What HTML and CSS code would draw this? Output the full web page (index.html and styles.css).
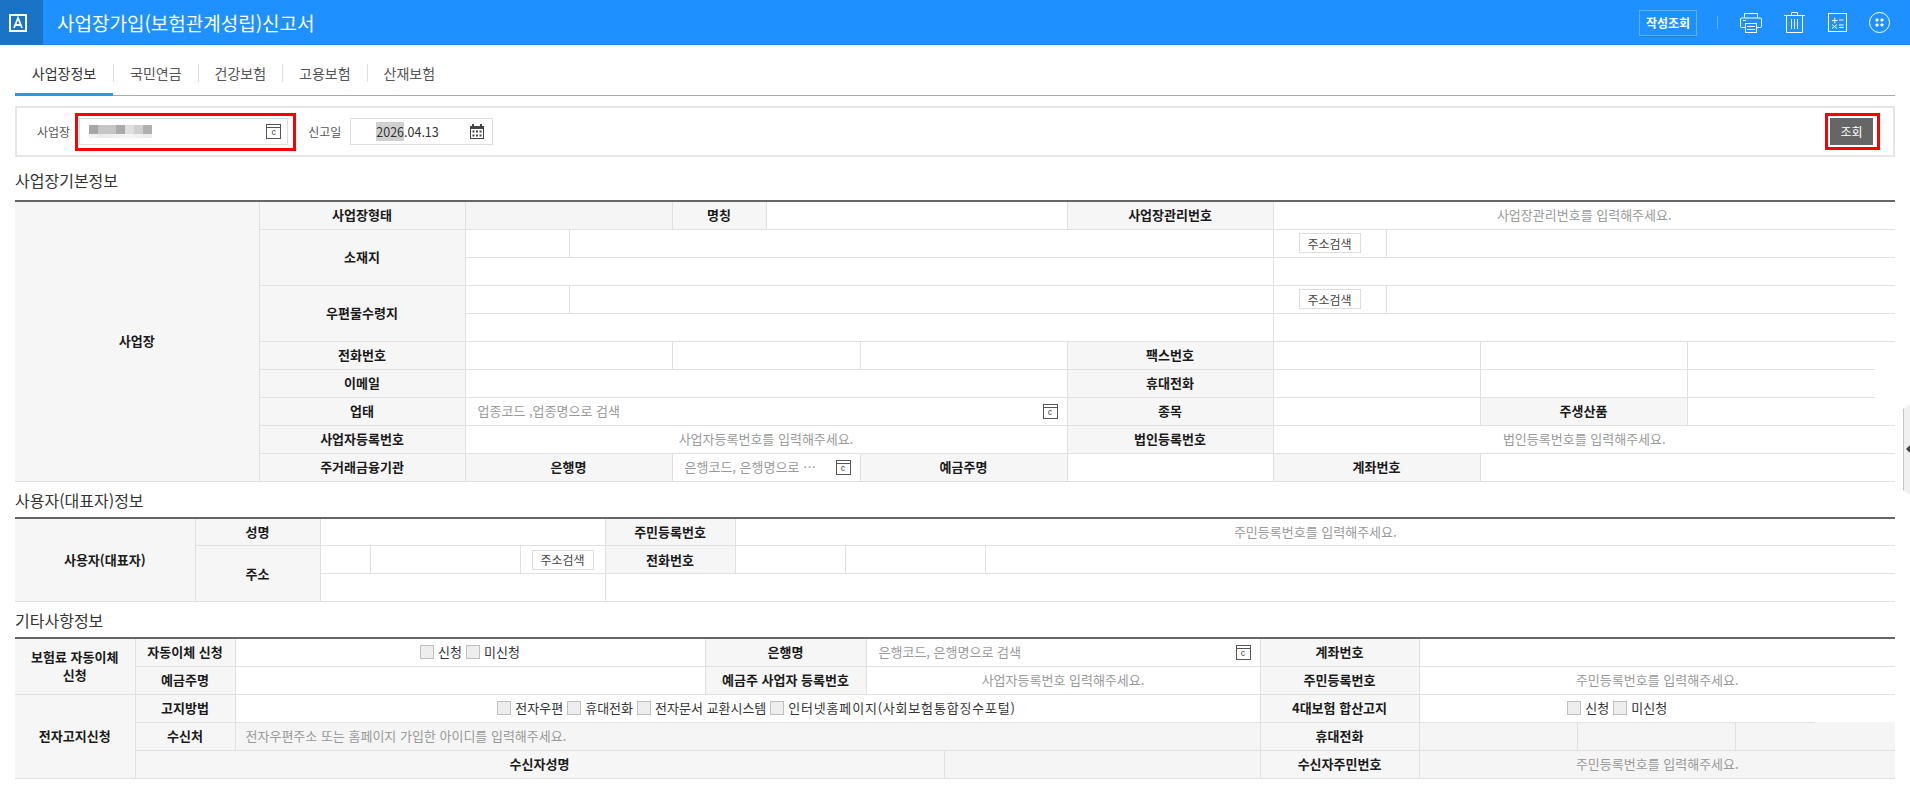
FILE: index.html
```html
<!DOCTYPE html>
<html lang="ko">
<head>
    <meta charset="UTF-8">
    <title>사업장가입(보험관계성립)신고서</title>
    <link rel="stylesheet" href="styles.css">
</head>
<body>
    <header class="topbar">
        <div class="logo">
            <svg width="18" height="18" viewBox="0 0 18 18">
                <rect x="1" y="1" width="16" height="16" fill="none" stroke="#fff" stroke-width="2"/>
                <path d="M5 14L9 4L13 14M6.200 11H11.800" fill="none" stroke="#fff" stroke-width="1.800"/>
            </svg>
        </div>
        <h1 class="title">사업장가입(보험관계성립)신고서</h1>
        <div class="actions">
            <button class="btn-history">작성조회</button>
            <span class="bar-sep"></span>
            <svg class="act" width="22" height="21" viewBox="0 0 22 21" fill="none" stroke="#fff">
                <path d="M4.500 6V1.500H17.500V6"/>
                <path d="M5.500 15.500H1.500a1 1 0 0 1-1-1V7a1 1 0 0 1 1-1H20.500a1 1 0 0 1 1 1V14.500a1 1 0 0 1-1 1H16.500"/>
                <rect x="5.500" y="11.500" width="11" height="9" fill="#1e90ff"/>
                <path d="M7 14.500H15M7 17.500H15M3 8.500H6"/>
            </svg>
            <svg class="act act-gap" width="21" height="21" viewBox="0 0 21 21" fill="none" stroke="#fff">
                <path d="M0 3.500H21M7.500 3.500V0.500H13.500V3.500"/>
                <path d="M2.500 3.500V20.500H18.500V3.500"/>
                <path d="M7.500 7V17M10.500 7V17M13.500 7V17"/>
            </svg>
            <svg class="act" width="19" height="19" viewBox="0 0 19 19" fill="none" stroke="#fff">
                <rect x="0.500" y="0.500" width="18" height="18"/>
                <path d="M4 7.500H9.500M6.750 4.700V10.300M11 7H15.500M4 11.500L9 15.500M9 11.500L4 15.500M11 12H15.500M11 14.500H15.500"/>
            </svg>
            <svg class="act" width="21" height="21" viewBox="0 0 21 21" fill="none" stroke="#fff">
                <circle cx="10.500" cy="10.500" r="10"/>
                <g fill="#fff" stroke="none">
                    <rect x="6.500" y="6.500" width="3" height="3" rx="1"/>
                    <rect x="11.500" y="6.500" width="3" height="3" rx="1"/>
                    <rect x="6.500" y="11.500" width="3" height="3" rx="1"/>
                    <rect x="11.500" y="11.500" width="3" height="3" rx="1"/>
                </g>
            </svg>
        </div>
    </header>

    <nav class="tabs">
        <a class="tab active">사업장정보</a>
        <span class="tab-sep"></span>
        <a class="tab">국민연금</a>
        <span class="tab-sep"></span>
        <a class="tab">건강보험</a>
        <span class="tab-sep"></span>
        <a class="tab">고용보험</a>
        <span class="tab-sep"></span>
        <a class="tab">산재보험</a>
    </nav>

    <main class="content">
        <div class="search">
            <label class="search-label">사업장</label>
            <div class="field field-biz marked">
                <span class="blur"></span>
                <span class="code-ico">c</span>
            </div>
            <label class="search-label label-date">신고일</label>
            <div class="field field-date">
                <span class="date-text"><span class="sel">2026</span>.04.13</span>
                <svg class="ico" width="14" height="15" viewBox="0 0 14 15">
                    <path d="M0 2H14V15H0Z" fill="#444"/>
                    <path d="M3 0V3M11 0V3" stroke="#444" stroke-width="2"/>
                    <path d="M1 5H13V14H1Z" fill="#fff"/>
                    <path d="M2.500 6.500h2v2h-2zM6 6.500h2v2H6zM9.500 6.500h2v2h-2zM2.500 10.500h2v2h-2zM6 10.500h2v2H6zM9.500 10.500h2v2h-2z" fill="#444"/>
                </svg>
            </div>
            <button class="btn-search marked">조회</button>
        </div>

        <h2 class="sec-title first">사업장기본정보</h2>
        <table class="grid">
            <colgroup>
                <col class="w244"><col class="w206"><col class="w104"><col class="w103"><col class="w94"><col class="w94">
                <col class="w207"><col class="w206"><col class="w113"><col class="w94"><col class="w207"><col class="w208">
            </colgroup>
            <tr>
                <th rowspan="10">사업장</th>
                <th>사업장형태</th>
                <td colspan="2" class="off"></td>
                <th>명칭</th>
                <td colspan="2"></td>
                <th>사업장관리번호</th>
                <td colspan="4" class="ph">사업장관리번호를 입력해주세요.</td>
            </tr>
            <tr>
                <th rowspan="2">소재지</th>
                <td></td>
                <td colspan="5"></td>
                <td class="center"><button class="btn-addr">주소검색</button></td>
                <td colspan="3"></td>
            </tr>
            <tr>
                <td colspan="6"></td>
                <td colspan="4"></td>
            </tr>
            <tr>
                <th rowspan="2">우편물수령지</th>
                <td></td>
                <td colspan="5"></td>
                <td class="center"><button class="btn-addr">주소검색</button></td>
                <td colspan="3"></td>
            </tr>
            <tr>
                <td colspan="6"></td>
                <td colspan="4"></td>
            </tr>
            <tr>
                <th>전화번호</th>
                <td colspan="2"></td>
                <td colspan="2"></td>
                <td></td>
                <th>팩스번호</th>
                <td colspan="2"></td>
                <td></td>
                <td class="short"></td>
            </tr>
            <tr>
                <th>이메일</th>
                <td colspan="5"></td>
                <th>휴대전화</th>
                <td colspan="2"></td>
                <td></td>
                <td class="short"></td>
            </tr>
            <tr>
                <th>업태</th>
                <td colspan="5">
                    <div class="lookup">
                        <span class="lookup-text">업종코드 ,업종명으로 검색</span>
                        <span class="code-ico">c</span>
                    </div>
                </td>
                <th>종목</th>
                <td colspan="2"></td>
                <th>주생산품</th>
                <td></td>
            </tr>
            <tr>
                <th>사업자등록번호</th>
                <td colspan="5" class="ph">사업자등록번호를 입력해주세요.</td>
                <th>법인등록번호</th>
                <td colspan="4" class="ph">법인등록번호를 입력해주세요.</td>
            </tr>
            <tr>
                <th>주거래금융기관</th>
                <th colspan="2">은행명</th>
                <td colspan="2">
                    <div class="lookup">
                        <span class="lookup-text">은행코드, 은행명으로 …</span>
                        <span class="code-ico">c</span>
                    </div>
                </td>
                <th>예금주명</th>
                <td></td>
                <th colspan="2">계좌번호</th>
                <td colspan="2"></td>
            </tr>
        </table>

        <h2 class="sec-title">사용자(대표자)정보</h2>
        <table class="grid">
            <colgroup>
                <col class="w180"><col class="w125"><col class="w50"><col class="w150"><col class="w85">
                <col class="w130"><col class="w110"><col class="w140"><col class="w910">
            </colgroup>
            <tr>
                <th rowspan="3">사용자(대표자)</th>
                <th>성명</th>
                <td colspan="3"></td>
                <th>주민등록번호</th>
                <td colspan="3" class="ph">주민등록번호를 입력해주세요.</td>
            </tr>
            <tr>
                <th rowspan="2">주소</th>
                <td></td>
                <td></td>
                <td class="center"><button class="btn-addr">주소검색</button></td>
                <th>전화번호</th>
                <td></td>
                <td></td>
                <td></td>
            </tr>
            <tr>
                <td colspan="3"></td>
                <td colspan="4"></td>
            </tr>
        </table>

        <h2 class="sec-title">기타사항정보</h2>
        <table class="grid">
            <colgroup>
                <col class="w120"><col class="w100"><col class="w470"><col class="w161"><col class="w78">
                <col class="w316"><col class="w159"><col class="w158"><col class="w158"><col class="w160">
            </colgroup>
            <tr>
                <th rowspan="2" class="wrap">보험료 자동이체<br>신청</th>
                <th>자동이체 신청</th>
                <td>
                    <div class="checks">
                        <label class="check"><input type="checkbox">신청</label>
                        <label class="check"><input type="checkbox">미신청</label>
                    </div>
                </td>
                <th>은행명</th>
                <td colspan="2">
                    <div class="lookup">
                        <span class="lookup-text">은행코드, 은행명으로 검색</span>
                        <span class="code-ico">c</span>
                    </div>
                </td>
                <th>계좌번호</th>
                <td colspan="3"></td>
            </tr>
            <tr>
                <th>예금주명</th>
                <td></td>
                <th>예금주 사업자 등록번호</th>
                <td colspan="2" class="ph">사업자등록번호 입력해주세요.</td>
                <th>주민등록번호</th>
                <td colspan="3" class="ph">주민등록번호를 입력해주세요.</td>
            </tr>
            <tr>
                <th rowspan="3">전자고지신청</th>
                <th>고지방법</th>
                <td colspan="4" class="pad-left">
                    <div class="checks">
                        <label class="check"><input type="checkbox">전자우편</label>
                        <label class="check"><input type="checkbox">휴대전화</label>
                        <label class="check"><input type="checkbox">전자문서 교환시스템</label>
                        <label class="check check-wide"><input type="checkbox">인터넷홈페이지(사회보험통합징수포털)</label>
                    </div>
                </td>
                <th>4대보험 합산고지</th>
                <td colspan="3" class="fade">
                    <div class="checks">
                        <label class="check"><input type="checkbox">신청</label>
                        <label class="check"><input type="checkbox">미신청</label>
                    </div>
                </td>
            </tr>
            <tr>
                <th>수신처</th>
                <td colspan="4" class="off ph left">전자우편주소 또는 홈페이지 가입한 아이디를 입력해주세요.</td>
                <th>휴대전화</th>
                <td class="off"></td>
                <td class="off"></td>
                <td class="off"></td>
            </tr>
            <tr>
                <th colspan="4">수신자성명</th>
                <td class="off"></td>
                <th>수신자주민번호</th>
                <td colspan="3" class="off ph">주민등록번호를 입력해주세요.</td>
            </tr>
        </table>
    </main>

    <div class="side-handle"></div>
</body>
</html>
```

FILE: styles.css
```css
* {
    box-sizing: border-box;
}
html, body {
    height: 100%;
    overflow: hidden;
}
body {
    margin: 0;
    background: #fff;
    color: #333;
    font-family: "Noto Sans CJK KR", "Noto Sans", sans-serif;
    font-size: 13px;
}

/* top bar */
.topbar {
    display: flex;
    align-items: center;
    height: 45px;
    background: #1e90ff;
    color: #fff;
}
.logo {
    display: flex;
    align-items: center;
    width: 43px;
    height: 45px;
    padding-left: 9px;
    background: #1a73c5;
}
.title {
    margin: 0 0 0 14px;
    font-size: 19px;
    font-weight: 400;
}
.actions {
    display: flex;
    align-items: center;
    margin-left: auto;
    padding-right: 20px;
}
.btn-history {
    width: 58px;
    height: 26px;
    padding: 0;
    border: 1px solid #5fb0ff;
    background: none;
    box-shadow: 0 1px 0 #1b82e6;
    color: #fff;
    font: 700 12px "Noto Sans CJK KR", sans-serif;
}
.bar-sep {
    width: 1px;
    height: 13px;
    margin: 0 22px 0 20px;
    background: #66b4ff;
}
.act {
    margin-right: 22px;
}
.act-gap {
    margin-right: 23px;
}
.act:last-child {
    margin-right: 0;
}

/* tabs */
.tabs {
    display: flex;
    align-items: center;
    height: 51px;
    margin: 0 15px;
    border-bottom: 1px solid #aaa;
}
.tab {
    position: relative;
    display: flex;
    align-items: center;
    justify-content: center;
    height: 50px;
    padding: 6px 16px 0;
    color: #555;
    font-size: 14px;
}
.tab.active {
    width: 98px;
    color: #333;
}
.tab.active::after {
    content: "";
    position: absolute;
    left: 0;
    right: 0;
    bottom: -1px;
    height: 3px;
    background: #1e9bf0;
}
.tab-sep {
    width: 1px;
    height: 18px;
    margin-top: 6px;
    background: #ddd;
}

.content {
    padding: 10px 15px 0;
}

/* search box */
.search {
    display: flex;
    align-items: center;
    height: 51px;
    padding: 0 20px;
    border: 2px solid #e5e5e5;
}
.search-label {
    margin-right: 9px;
    color: #555;
    font-size: 12px;
}
.label-date {
    margin-left: 20px;
}
.field {
    display: flex;
    align-items: center;
    justify-content: space-between;
    height: 27px;
    border: 1px solid #ddd;
}
.field-biz {
    width: 209px;
    padding: 0 6px 0 9px;
}
.field-date {
    width: 143px;
    padding: 0 8px 0 25px;
}
.marked {
    position: relative;
}
.marked::after {
    content: "";
    position: absolute;
    top: -6px;
    right: -9px;
    bottom: -7px;
    left: -5px;
    border: 3px solid #f00;
}
.btn-search.marked::after {
    top: -5px;
    right: -7px;
    bottom: -5px;
}
.blur {
    width: 63px;
    height: 13px;
    background:
        linear-gradient(to right, #a6a6a6 0 9px, #c5c5c5 9px 27px, #aaa 27px 36px, #e0e0e0 36px 45px, #cfcfcf 45px 54px, #b0b0b0 54px 63px) 0 0 / 100% 9px no-repeat,
        linear-gradient(to right, #f2f2f2, #ebebeb 20%, #f4f4f4 60%, #ececec);
}
.date-text {
    color: #333;
    font-size: 12.5px;
}
.sel {
    background: #d0d0d0;
}
.ico {
    flex: none;
    display: block;
}
.code-ico {
    flex: none;
    display: block;
    width: 15px;
    height: 15px;
    border: 1px solid #555;
    background: linear-gradient(#555, #555) 0 2px / 100% 1px no-repeat;
    color: #444;
    font: 9px/15px "Liberation Sans", sans-serif;
    text-align: center;
}
.btn-search {
    width: 43px;
    height: 27px;
    margin-left: auto;
    padding: 0;
    border: 0;
    background: #666;
    color: #fff;
    font: 400 12px "Noto Sans CJK KR", sans-serif;
}

.sec-title {
    margin: 0;
    padding: 8px 0 6px;
    color: #333;
    font-size: 16px;
    font-weight: 400;
    line-height: 21px;
}
.sec-title.first {
    padding: 13px 0 9px;
}

/* form tables */
.grid {
    width: 1880px;
    border-collapse: collapse;
    border-top: 2px solid #666;
    border-left: hidden;
    border-right: hidden;
    table-layout: fixed;
}
.grid tr {
    height: 28px;
}
.grid th, .grid td {
    height: 28px;
    padding: 0;
    border: 1px solid #e0e0e0;
    font-size: 13px;
    line-height: 18px;
}
.grid tr:first-child th, .grid tr:first-child td {
    border-top: 2px solid #666;
}
.grid th {
    background: #f6f6f6;
    color: #1a1a1a;
    font-weight: 700;
    text-align: center;
}
.grid td.off {
    background: #f5f5f5;
}
.grid td.ph {
    color: #999;
    text-align: center;
}
.grid td.left {
    padding-left: 10px;
    text-align: left;
}
.grid td.center {
    text-align: center;
}
.grid td.pad-left {
    padding-left: 18px;
}
.grid td.short, .grid td.fade {
    position: relative;
}
.grid td.short::after {
    content: "";
    position: absolute;
    right: 0;
    bottom: -1px;
    width: 20px;
    height: 1px;
    background: #fff;
}
.grid td.fade {
    padding-right: 80px;
}
.grid td.fade::after {
    content: "";
    position: absolute;
    right: 0;
    bottom: -1px;
    width: 80px;
    height: 1px;
    background: #f5f5f5;
}

.w50 { width: 50px; }
.w78 { width: 78px; }
.w85 { width: 85px; }
.w94 { width: 94px; }
.w100 { width: 100px; }
.w103 { width: 103px; }
.w104 { width: 104px; }
.w110 { width: 110px; }
.w113 { width: 113px; }
.w120 { width: 120px; }
.w125 { width: 125px; }
.w130 { width: 130px; }
.w140 { width: 140px; }
.w150 { width: 150px; }
.w158 { width: 158px; }
.w159 { width: 159px; }
.w160 { width: 160px; }
.w161 { width: 161px; }
.w180 { width: 180px; }
.w206 { width: 206px; }
.w207 { width: 207px; }
.w208 { width: 208px; }
.w244 { width: 244px; }
.w316 { width: 316px; }
.w470 { width: 470px; }
.w910 { width: 910px; }

.btn-addr {
    width: 62px;
    height: 20px;
    padding: 0;
    border: 1px solid #ddd;
    background: #fff;
    color: #444;
    font: 400 12px "Noto Sans CJK KR", sans-serif;
    vertical-align: middle;
}
.lookup {
    display: flex;
    align-items: center;
    justify-content: space-between;
    padding: 0 9px 0 12px;
}
.lookup-text {
    color: #999;
}
.checks {
    display: flex;
    justify-content: center;
    gap: 4px;
}
.check {
    display: flex;
    align-items: center;
    color: #333;
}
.check-wide {
    letter-spacing: 0.8px;
}
.check input {
    appearance: none;
    width: 14px;
    height: 14px;
    margin: 0 4px 0 0;
    border: 1px solid #c0c0c0;
    background: #eee;
}

/* collapsed side panel handle */
.side-handle {
    position: absolute;
    top: 404px;
    right: 0;
    width: 7px;
    height: 91px;
    border-left: 1px solid #c4c4c4;
    background: #f0f0f0;
    clip-path: polygon(0 5px, 100% 0, 100% 100%, 0 calc(100% - 5px));
}
.side-handle::after {
    content: "";
    position: absolute;
    top: 41px;
    right: 0;
    border: 4px solid transparent;
    border-right-color: #444;
    border-left-width: 0;
}
```
